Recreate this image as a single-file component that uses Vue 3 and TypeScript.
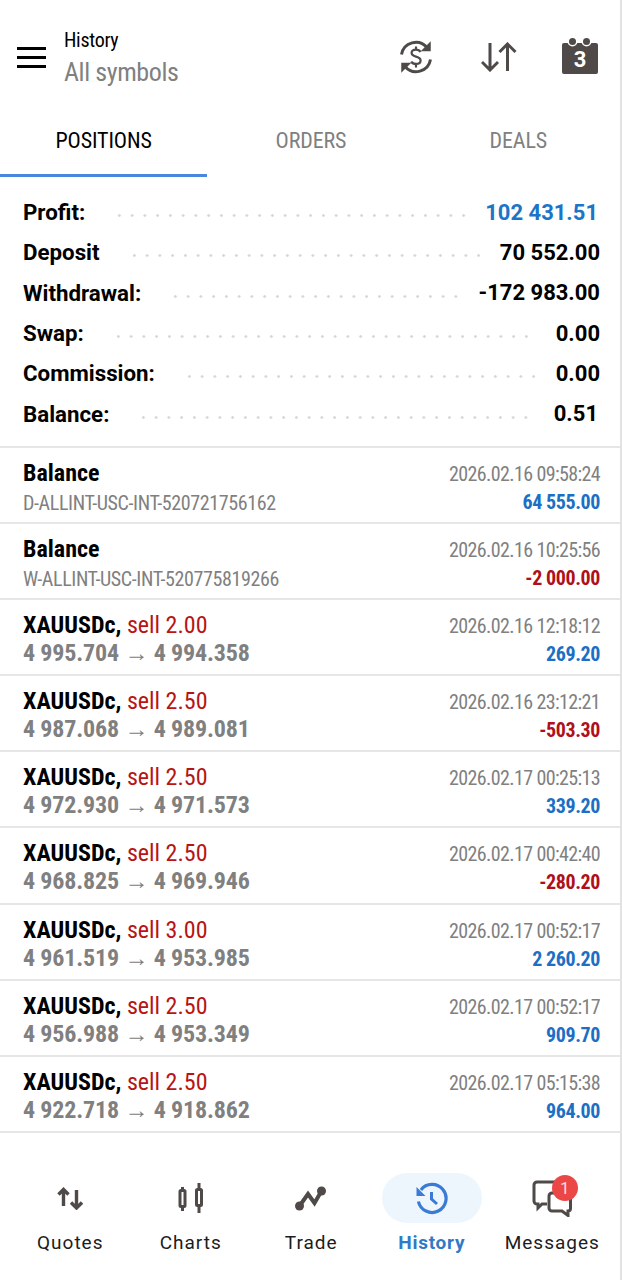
<script setup lang="ts">
import { ref } from "vue";

type Tone = "plus" | "minus";

interface Row {
  title: string;
  side?: string;
  sub: string;
  time: string;
  amount: string;
  tone: Tone;
}

const tabs = ["POSITIONS", "ORDERS", "DEALS"];
const activeTab = ref(0);

const summary = [
  { label: "Profit:", value: "102 431.51", blue: true, nudge: true },
  { label: "Deposit", value: "70 552.00", blue: false, nudge: false },
  { label: "Withdrawal:", value: "-172 983.00", blue: false, nudge: false },
  { label: "Swap:", value: "0.00", blue: false, nudge: false },
  { label: "Commission:", value: "0.00", blue: false, nudge: false },
  { label: "Balance:", value: "0.51", blue: false, nudge: true },
];

const rows: Row[] = [
  { title: "Balance", sub: "D-ALLINT-USC-INT-520721756162", time: "2026.02.16 09:58:24", amount: "64 555.00", tone: "plus" },
  { title: "Balance", sub: "W-ALLINT-USC-INT-520775819266", time: "2026.02.16 10:25:56", amount: "-2 000.00", tone: "minus" },
  { title: "XAUUSDc,", side: "sell 2.00", sub: "4 995.704 → 4 994.358", time: "2026.02.16 12:18:12", amount: "269.20", tone: "plus" },
  { title: "XAUUSDc,", side: "sell 2.50", sub: "4 987.068 → 4 989.081", time: "2026.02.16 23:12:21", amount: "-503.30", tone: "minus" },
  { title: "XAUUSDc,", side: "sell 2.50", sub: "4 972.930 → 4 971.573", time: "2026.02.17 00:25:13", amount: "339.20", tone: "plus" },
  { title: "XAUUSDc,", side: "sell 2.50", sub: "4 968.825 → 4 969.946", time: "2026.02.17 00:42:40", amount: "-280.20", tone: "minus" },
  { title: "XAUUSDc,", side: "sell 3.00", sub: "4 961.519 → 4 953.985", time: "2026.02.17 00:52:17", amount: "2 260.20", tone: "plus" },
  { title: "XAUUSDc,", side: "sell 2.50", sub: "4 956.988 → 4 953.349", time: "2026.02.17 00:52:17", amount: "909.70", tone: "plus" },
  { title: "XAUUSDc,", side: "sell 2.50", sub: "4 922.718 → 4 918.862", time: "2026.02.17 05:15:38", amount: "964.00", tone: "plus" },
];
</script>

<template>
  <div class="screen">
    <header class="top">
      <div class="burger"><i></i><i></i><i></i></div>
      <div class="heading">
        <div class="heading-main">History</div>
        <div class="heading-sub">All symbols</div>
      </div>
      <div class="actions">
        <svg class="sync" viewBox="0 0 36 36" width="36" height="36" fill="none" stroke="#4f4a48" stroke-width="3">
          <path d="M3.500 15.500A14.600 14.600 0 0 1 29 8.500" />
          <path d="M32.500 20.500A14.600 14.600 0 0 1 7 27.500" />
          <path d="M32 4v7.500h-7.500z" fill="#4f4a48" stroke-width="1.500" />
          <path d="M4 32v-7.500h7.500z" fill="#4f4a48" stroke-width="1.500" />
          <path d="M22.500 13c-.8-1.400-2.400-2.300-4.500-2.300-2.500 0-4.400 1.300-4.400 3.400 0 4.600 9 2.500 9 7.400 0 2.100-1.900 3.400-4.600 3.400-2.200 0-3.900-.8-4.800-2.300M18 7.500v3.200M18 25.500v3" stroke-width="2.200" />
        </svg>
        <svg class="arrows" viewBox="0 0 36 30" width="36" height="30" fill="none" stroke="#4f4a48" stroke-width="3">
          <path d="M9 1v27M1 20l8 8 8-8" />
          <path d="M26.500 29V2M18.500 10l8-8 8 8" />
        </svg>
        <div class="calendar">
          <i class="ring ring-a"></i>
          <i class="ring ring-b"></i>
          <span>3</span>
        </div>
      </div>
    </header>

    <nav class="tabs">
      <div v-for="(tab, i) in tabs" :key="tab" class="tab" :class="{ active: i === activeTab }" @click="activeTab = i">
        {{ tab }}
      </div>
    </nav>

    <section class="summary">
      <div v-for="item in summary" :key="item.label" class="sum-row">
        <span class="sum-label">{{ item.label }}</span>
        <span class="dots"></span>
        <span class="sum-value" :class="{ blue: item.blue, nudge: item.nudge }">{{ item.value }}</span>
      </div>
    </section>

    <section class="list">
      <div v-for="row in rows" :key="row.time + row.sub" class="row">
        <div class="row-left">
          <div class="row-title">{{ row.title }}<span v-if="row.side" class="side">&nbsp;{{ row.side }}</span></div>
          <div class="row-sub" :class="{ prices: row.side }">{{ row.sub }}</div>
        </div>
        <div class="row-right">
          <div class="row-time">{{ row.time }}</div>
          <div class="row-amount" :class="row.tone">{{ row.amount }}</div>
        </div>
      </div>
    </section>

    <footer class="bottom">
      <div class="nav-item">
        <div class="nav-icon">
          <svg viewBox="0 0 26 24" width="26" height="24" fill="none" stroke="#4f4a48" stroke-width="3.400">
            <path d="M6.500 20V4M1.500 8.500l5-5 5 5" />
            <path d="M19.500 4v18M14 16.500l5.500 5.500 5.500-5.500" />
          </svg>
        </div>
        <span>Quotes</span>
      </div>
      <div class="nav-item">
        <div class="nav-icon">
          <svg viewBox="0 0 28 32" width="28" height="32" fill="#fff" stroke="#4f4a48" stroke-width="3">
            <path d="M5.500 5v24M22 1v30" />
            <rect x="3" y="8.500" width="5" height="16" rx="1" />
            <rect x="19.500" y="7.500" width="5" height="16" rx="1" />
          </svg>
        </div>
        <span>Charts</span>
      </div>
      <div class="nav-item">
        <div class="nav-icon">
          <svg viewBox="0 0 34 28" width="34" height="28" fill="#4f4a48" stroke="#4f4a48">
            <path d="M5.500 22 14 10l6.500 9L27.500 7" fill="none" stroke-width="4" />
            <circle cx="5.500" cy="22" r="4.500" stroke="none" />
            <circle cx="27.500" cy="7" r="4.500" stroke="none" />
          </svg>
        </div>
        <span>Trade</span>
      </div>
      <div class="nav-item current">
        <div class="nav-icon pill">
          <svg viewBox="0 0 34 34" width="34" height="34" fill="none" stroke="#3a7bd5" stroke-width="3.200">
            <path d="M5.900 9A14 14 0 1 1 3.400 20.500" />
            <path d="M1.500 6v9h9z" fill="#3a7bd5" stroke="none" />
            <path d="M16.500 11v7l5.500 5" stroke-width="3" />
          </svg>
        </div>
        <span>History</span>
      </div>
      <div class="nav-item">
        <div class="nav-icon">
          <svg viewBox="0 0 40 38" width="40" height="38" fill="none" stroke="#4f4a48" stroke-width="3">
            <path d="M15 25h-5l-4 4v-4H5a3 3 0 0 1-3-3V6a3 3 0 0 1 3-3h20" />
            <path d="M22 14h-2a3 3 0 0 0-3 3v12a3 3 0 0 0 3 3h10l6 4.500V32a2.500 2.500 0 0 0 2.500-2.500V14" />
          </svg>
          <b class="badge">1</b>
        </div>
        <span>Messages</span>
      </div>
    </footer>
  </div>
</template>

<style>
html,
body {
  margin: 0;
  background: #fff;
}
</style>

<style scoped>
.screen {
  position: relative;
  width: 622px;
  height: 1280px;
  box-sizing: border-box;
  border-right: 2px solid #e2e2e2;
  background: #fff;
  font-family: Roboto, "Liberation Sans", sans-serif;
  overflow: hidden;
  color: #000;
}

.top {
  display: flex;
  align-items: center;
  height: 105px;
  padding: 9px 22px 0 17px;
  box-sizing: border-box;
}

.burger {
  display: flex;
  flex-direction: column;
  gap: 6px;
  width: 29px;
  margin-right: 18px;
}

.burger i {
  display: block;
  height: 3px;
  background: #000;
}

.heading {
  margin-top: 2px;
}

.heading-main {
  font-size: 20px;
  line-height: 26px;
  letter-spacing: -0.3px;
  font-stretch: 75%;
}

.heading-sub {
  margin-top: 2px;
  font-size: 26px;
  line-height: 34px;
  letter-spacing: -0.4px;
  color: #808080;
  font-stretch: 75%;
}

.actions {
  display: flex;
  align-items: center;
  gap: 46px;
  margin-left: auto;
}

.sync {
  margin-right: 1px;
}

.arrows {
  margin-right: -1px;
}

.calendar {
  position: relative;
  width: 36px;
  height: 31px;
  margin-top: 3px;
  border-radius: 2px;
  background: #4f4a48;
  color: #fff;
  font-size: 22px;
  font-weight: 700;
  line-height: 34px;
  text-align: center;
}

.ring {
  position: absolute;
  top: -5px;
  width: 7px;
  height: 7px;
  border-radius: 50%;
  background: #4f4a48;
  box-shadow: 0 0 0 1.500px #fff;
}

.ring-a {
  left: 7px;
}

.ring-b {
  right: 8px;
}

.tabs {
  display: flex;
  height: 72px;
  margin-right: -2px;
}

.tab {
  flex: 1;
  padding-top: 22px;
  box-sizing: border-box;
  color: #808080;
  font-size: 22px;
  line-height: 28px;
  letter-spacing: -0.1px;
  text-align: center;
  font-stretch: 75%;
}

.tab.active {
  color: #000;
  border-bottom: 3px solid #4a86dc;
}

.summary {
  height: 271px;
  padding: 15px 20px 0 23px;
  box-sizing: border-box;
  border-bottom: 2px solid #e6e6e6;
}

.sum-row {
  display: flex;
  align-items: center;
  height: 40.300px;
  font-size: 22px;
  font-weight: 700;
}

.sum-label {
  font-size: 22.300px;
}

.dots {
  flex: 1;
  height: 3px;
  margin: 7px 19px 0 28px;
  background: radial-gradient(circle, #d6d6d6 1.200px, transparent 1.500px) 0 0 / 12.750px 3px repeat-x;
}

.sum-value.blue {
  color: #1c75c8;
}

.sum-value.nudge {
  margin-right: 2px;
}

.row {
  display: flex;
  justify-content: space-between;
  height: 76.100px;
  padding: 9px 20px 0 23px;
  box-sizing: border-box;
  border-bottom: 2px solid #e6e6e6;
}

.row-title {
  font-size: 24px;
  font-weight: 700;
  line-height: 32px;
  font-stretch: 75%;
}

.side {
  color: #b81414;
  font-weight: 400;
}

.row-sub {
  margin-top: 1px;
  color: #808080;
  font-size: 20px;
  line-height: 26px;
  letter-spacing: -0.38px;
  font-stretch: 75%;
}

.row-sub.prices {
  margin-top: -3px;
  font-size: 24px;
  font-weight: 700;
  line-height: 30px;
  letter-spacing: -0.15px;
}

.row-right {
  text-align: right;
}

.row-time {
  margin-top: 3px;
  color: #808080;
  font-size: 20px;
  line-height: 28px;
  letter-spacing: -0.62px;
  font-stretch: 75%;
}

.row-amount {
  margin-top: 1px;
  font-size: 20px;
  font-weight: 700;
  line-height: 26px;
  letter-spacing: -0.4px;
  font-stretch: 75%;
}

.plus {
  color: #1c6fc4;
}

.minus {
  color: #b01018;
}

.bottom {
  display: flex;
  position: absolute;
  left: 0;
  right: 0;
  bottom: 0;
  height: 147px;
  padding: 0 7.500px 0 10px;
  box-sizing: border-box;
}

.nav-item {
  flex: 1;
  display: flex;
  flex-direction: column;
  align-items: center;
  padding-top: 40px;
  color: #1c1c1c;
  font-size: 19px;
  letter-spacing: 1px;
}

.nav-icon {
  position: relative;
  display: flex;
  align-items: center;
  justify-content: center;
  width: 100px;
  height: 50px;
  margin-bottom: 6px;
  line-height: 0;
}

.nav-icon.pill {
  border-radius: 25px;
  background: #eef6fd;
}

.nav-item span {
  line-height: 28px;
}

.current {
  color: #2f7ac6;
  font-weight: 700;
  letter-spacing: 0.75px;
}

.badge {
  position: absolute;
  top: 2px;
  left: 49.500px;
  width: 26px;
  height: 26px;
  border-radius: 50%;
  background: #eb4747;
  color: #fbdcdc;
  font-size: 17px;
  font-weight: 400;
  letter-spacing: 0;
  line-height: 26px;
  text-align: center;
}
</style>
